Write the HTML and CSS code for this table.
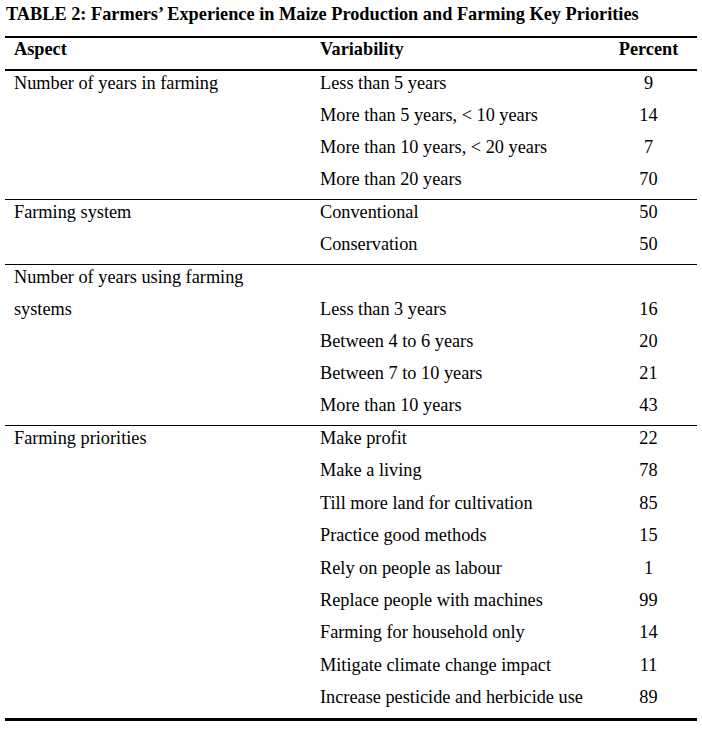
FILE: index.html
```html
<!DOCTYPE html>
<html lang="en">
<head>
<meta charset="utf-8">
<title>Table 2</title>
<link rel="stylesheet" href="styles.css">
</head>
<body>
<h1 class="caption">TABLE 2: Farmers’ Experience in Maize Production and Farming Key Priorities</h1>
<table class="data">
  <colgroup>
    <col class="c-aspect">
    <col class="c-var">
    <col class="c-pct">
  </colgroup>
  <thead>
    <tr>
      <th class="aspect">Aspect</th>
      <th class="var">Variability</th>
      <th class="pct">Percent</th>
    </tr>
  </thead>
  <tbody class="g1">
    <tr class="first"><td class="aspect">Number of years in farming</td><td class="var">Less than 5 years</td><td class="pct">9</td></tr>
    <tr><td class="aspect"></td><td class="var">More than 5 years, &lt; 10 years</td><td class="pct">14</td></tr>
    <tr><td class="aspect"></td><td class="var">More than 10 years, &lt; 20 years</td><td class="pct">7</td></tr>
    <tr><td class="aspect"></td><td class="var">More than 20 years</td><td class="pct">70</td></tr>
  </tbody>
  <tbody class="g2">
    <tr class="first"><td class="aspect">Farming system</td><td class="var">Conventional</td><td class="pct">50</td></tr>
    <tr><td class="aspect"></td><td class="var">Conservation</td><td class="pct">50</td></tr>
  </tbody>
  <tbody class="g3">
    <tr class="first"><td class="aspect">Number of years using farming</td><td class="var"></td><td class="pct"></td></tr>
    <tr><td class="aspect">systems</td><td class="var">Less than 3 years</td><td class="pct">16</td></tr>
    <tr><td class="aspect"></td><td class="var">Between 4 to 6 years</td><td class="pct">20</td></tr>
    <tr><td class="aspect"></td><td class="var">Between 7 to 10 years</td><td class="pct">21</td></tr>
    <tr><td class="aspect"></td><td class="var">More than 10 years</td><td class="pct">43</td></tr>
  </tbody>
  <tbody class="g4">
    <tr class="first"><td class="aspect">Farming priorities</td><td class="var">Make profit</td><td class="pct">22</td></tr>
    <tr><td class="aspect"></td><td class="var">Make a living</td><td class="pct">78</td></tr>
    <tr><td class="aspect"></td><td class="var">Till more land for cultivation</td><td class="pct">85</td></tr>
    <tr><td class="aspect"></td><td class="var">Practice good methods</td><td class="pct">15</td></tr>
    <tr><td class="aspect"></td><td class="var">Rely on people as labour</td><td class="pct">1</td></tr>
    <tr><td class="aspect"></td><td class="var">Replace people with machines</td><td class="pct">99</td></tr>
    <tr><td class="aspect"></td><td class="var">Farming for household only</td><td class="pct">14</td></tr>
    <tr><td class="aspect"></td><td class="var">Mitigate climate change impact</td><td class="pct">11</td></tr>
    <tr class="last"><td class="aspect"></td><td class="var">Increase pesticide and herbicide use</td><td class="pct">89</td></tr>
  </tbody>
</table>
</body>
</html>
```

FILE: styles.css
```css
html, body {
  margin: 0;
  padding: 0;
  background: #ffffff;
}

body {
  font-family: "Liberation Serif", "Times New Roman", serif;
  font-size: 18.3px;
  color: #000000;
}

.caption {
  margin: 5px 0 0 6px;
  font-size: 18.3px;
  line-height: 18px;
  font-weight: bold;
}

.data {
  margin: 13px 0 0 5px;
  width: 692px;
  border-collapse: separate;
  border-spacing: 0;
  table-layout: fixed;
}

.c-aspect { width: 306px; }
.c-var { width: 289px; }
.c-pct { width: 97px; }

.data th,
.data td {
  padding: 0 0 0 9px;
  line-height: 18px;
  vertical-align: top;
  white-space: nowrap;
}

.data th {
  font-weight: bold;
  text-align: left;
  padding-top: 2px;
  padding-bottom: 11px;
  border-top: 2px solid #000;
  border-bottom: 2px solid #000;
}

.data td {
  padding-top: 3px;
  padding-bottom: 11px;
}

.data .pct {
  text-align: center;
  padding-left: 0;
}

.data tbody tr.first td {
  border-top: 1px solid #000;
}

.data tbody.g1 tr.first td {
  border-top: 0;
}

.data tbody.g4 td {
  padding-bottom: 11.4px;
}

.data tbody.g4 tr.last td {
  border-bottom: 3px solid #000;
  padding-bottom: 12px;
}
```
